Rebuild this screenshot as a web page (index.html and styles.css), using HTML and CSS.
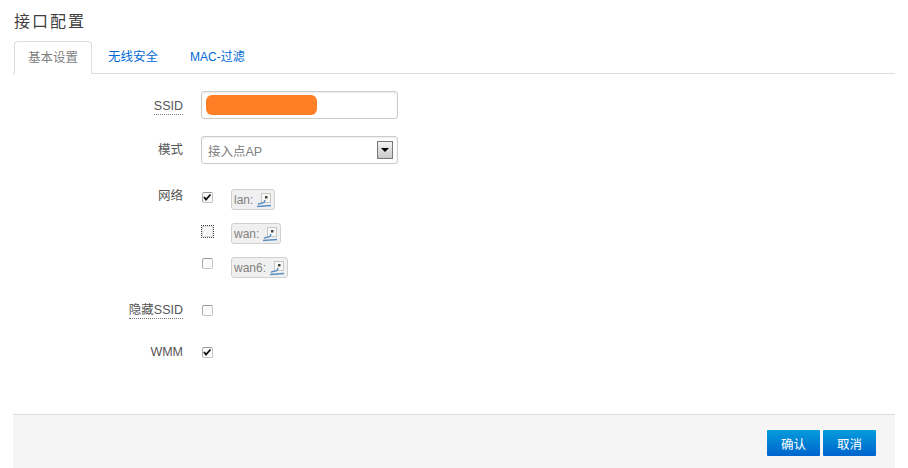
FILE: index.html
```html
<!DOCTYPE html>
<html lang="zh-CN">
<head>
    <meta charset="UTF-8">
    <title>接口配置</title>
    <link rel="stylesheet" href="styles.css">
</head>
<body>
    <div class="page">
        <h2 class="title">接口配置</h2>

        <ul class="tabs">
            <li class="tab active">基本设置</li>
            <li class="tab">无线安全</li>
            <li class="tab tab-mac">MAC-过滤</li>
        </ul>

        <div class="form">
            <div class="row row-ssid">
                <label class="label tip">SSID</label>
                <div class="field">
                    <div class="input">
                        <span class="redact"></span>
                    </div>
                </div>
            </div>

            <div class="row row-mode">
                <label class="label">模式</label>
                <div class="field">
                    <div class="input select">
                        <span class="select-text">接入点AP</span>
                        <span class="select-btn"><span class="select-arrow"></span></span>
                    </div>
                </div>
            </div>

            <div class="row row-net">
                <label class="label">网络</label>
                <div class="field net-list">
                    <div class="net-item">
                        <span class="check checked">
                            <svg viewBox="0 0 10 10" width="10" height="10"><path d="M2 5 L4 7.5 L8.5 2.5" fill="none" stroke="#111" stroke-width="1.8"/></svg>
                        </span>
                        <span class="badge">lan:
                            <svg class="net-icon" viewBox="0 0 16 16" width="16" height="16">
                                <rect x="5.5" y="1.5" width="9" height="9" fill="#f8f8f4" stroke="#c8c8c8" stroke-width="1"/>
                                <rect x="9" y="4" width="2.5" height="2.5" fill="#444"/>
                                <path d="M2 12.5 C4 10 6 12 8 10.5 L9 8" fill="none" stroke="#5a8fc4" stroke-width="1.5"/>
                                <path d="M1 14.5 L15 13.5" stroke="#5a8fc4" stroke-width="1.5"/>
                            </svg>
                        </span>
                    </div>
                    <div class="net-item">
                        <span class="check focused"></span>
                        <span class="badge">wan:
                            <svg class="net-icon" viewBox="0 0 16 16" width="16" height="16">
                                <rect x="5.5" y="1.5" width="9" height="9" fill="#f8f8f4" stroke="#c8c8c8" stroke-width="1"/>
                                <rect x="9" y="4" width="2.5" height="2.5" fill="#444"/>
                                <path d="M2 12.5 C4 10 6 12 8 10.5 L9 8" fill="none" stroke="#5a8fc4" stroke-width="1.5"/>
                                <path d="M1 14.5 L15 13.5" stroke="#5a8fc4" stroke-width="1.5"/>
                            </svg>
                        </span>
                    </div>
                    <div class="net-item">
                        <span class="check"></span>
                        <span class="badge">wan6:
                            <svg class="net-icon" viewBox="0 0 16 16" width="16" height="16">
                                <rect x="5.5" y="1.5" width="9" height="9" fill="#f8f8f4" stroke="#c8c8c8" stroke-width="1"/>
                                <rect x="9" y="4" width="2.5" height="2.5" fill="#444"/>
                                <path d="M2 12.5 C4 10 6 12 8 10.5 L9 8" fill="none" stroke="#5a8fc4" stroke-width="1.5"/>
                                <path d="M1 14.5 L15 13.5" stroke="#5a8fc4" stroke-width="1.5"/>
                            </svg>
                        </span>
                    </div>
                </div>
            </div>

            <div class="row row-hide">
                <label class="label tip">隐藏SSID</label>
                <div class="field"><span class="check"></span></div>
            </div>

            <div class="row row-wmm">
                <label class="label">WMM</label>
                <div class="field">
                    <span class="check checked">
                        <svg viewBox="0 0 10 10" width="10" height="10"><path d="M2 5 L4 7.5 L8.5 2.5" fill="none" stroke="#111" stroke-width="1.8"/></svg>
                    </span>
                </div>
            </div>
        </div>

        <div class="actions">
            <button class="btn">确认</button>
            <button class="btn">取消</button>
        </div>
    </div>
</body>
</html>
```

FILE: styles.css
```css
body {
    margin: 0;
    background: #fff;
    color: #555;
    font-family: "Liberation Sans", "Noto Sans CJK SC", sans-serif;
    font-size: 12.5px;
}
.page {
    width: 882px;
    height: 468px;
    margin-left: 13px;
    overflow: hidden;
}
.title {
    margin: 0;
    padding: 12px 0 0 1px;
    height: 41px;
    box-sizing: border-box;
    font-size: 16px;
    font-weight: normal;
    line-height: 20px;
    letter-spacing: 2px;
    color: #404040;
}

/* Tabs */
.tabs {
    display: flex;
    list-style: none;
    margin: 0;
    padding: 0 0 0 1px;
    height: 33px;
    box-sizing: border-box;
    border-bottom: 1px solid #ddd;
}
.tab {
    height: 32px;
    line-height: 33px;
    padding: 0 16px;
    color: #0069d6;
    white-space: nowrap;
}
.tab-mac {
    font-size: 12px;
}
.active {
    height: 33px;
    width: 78px;
    box-sizing: border-box;
    padding: 0 13px;
    color: #808080;
    background: #fff;
    border: 1px solid #ddd;
    border-bottom: none;
    border-radius: 4px 4px 0 0;
}

/* Form rows */
.form {
    padding-top: 17px;
}
.row {
    display: grid;
    grid-template-columns: 170px 1fr;
    column-gap: 18px;
}
.label {
    justify-self: end;
    height: 16px;
    line-height: 16px;
}
.tip {
    border-bottom: 1px dotted #777;
}
.row-ssid .label {
    margin-top: 7px;
}
.row-mode {
    margin-top: 17px;
}
.row-mode .label {
    margin-top: 6px;
}
.row-net {
    margin-top: 22px;
}
.row-net .label {
    margin-top: 2px;
}
.row-hide {
    margin-top: 24px;
}
.row-wmm {
    margin-top: 25px;
}
.row-hide .field,
.row-wmm .field {
    display: flex;
    align-items: center;
    height: 16px;
}

/* Inputs */
.input {
    display: flex;
    align-items: center;
    width: 197px;
    height: 28px;
    box-sizing: border-box;
    border: 1px solid #ccc;
    border-radius: 3px;
    background: #fff;
    box-shadow: inset 0 1px 2px rgba(0, 0, 0, 0.08);
}
.redact {
    display: block;
    width: 111px;
    height: 20px;
    margin-left: 4px;
    background: #ff7f27;
    border-radius: 6px;
}
.select {
    justify-content: space-between;
    padding: 0 4px 0 6px;
    color: #808080;
}
.select-btn {
    display: flex;
    align-items: center;
    justify-content: center;
    width: 16px;
    height: 18px;
    box-sizing: border-box;
    border: 1px solid #777;
    background: linear-gradient(to bottom, #f2f2f2, #c8c8c8);
}
.select-arrow {
    width: 0;
    height: 0;
    border-left: 4px solid transparent;
    border-right: 4px solid transparent;
    border-top: 4px solid #000;
}

/* Checkboxes */
.check {
    display: flex;
    flex: none;
    width: 11px;
    height: 11px;
    box-sizing: border-box;
    margin-left: 1px;
    border: 1px solid #c4c4c4;
    border-top-color: #999;
    border-left-color: #aaa;
    border-radius: 2px;
    background: #fafafa;
}
.checked svg {
    display: block;
    margin: -1px 0 0 -1px;
}
.focused {
    width: 13px;
    height: 13px;
    margin-left: 0;
    border: 1px dotted #444;
    border-radius: 0;
    box-shadow: inset 0 0 0 1px #ddd;
}

/* Network list */
.net-list {
    display: flex;
    flex-direction: column;
    row-gap: 13px;
    padding-top: 3px;
}
.net-item {
    display: flex;
    height: 21px;
}
.net-item .check {
    margin-top: 3px;
}
.net-item .focused {
    margin-top: 2px;
}
.net-item:last-child .check {
    margin-top: 1px;
}
.check + .badge {
    margin-left: 18px;
}
.focused + .badge {
    margin-left: 17px;
}
.badge {
    display: inline-flex;
    align-items: center;
    column-gap: 3px;
    height: 21px;
    box-sizing: border-box;
    padding: 0 2px;
    border: 1px solid #d0d0d0;
    border-radius: 3px;
    background: #f0f0f0;
    color: #808080;
    font-size: 12px;
}
.net-icon {
    display: block;
}

/* Footer actions */
.actions {
    display: flex;
    justify-content: flex-end;
    column-gap: 3px;
    height: 54px;
    box-sizing: border-box;
    margin-top: 54px;
    padding: 15px 19px 0 0;
    background: #f5f5f5;
    border-top: 1px solid #ddd;
}
.btn {
    width: 53px;
    height: 26px;
    padding: 0;
    border: none;
    border-radius: 1px;
    background: linear-gradient(to bottom, #049cdb, #0064cd);
    color: #fff;
    font-family: inherit;
    font-size: 12.5px;
}
```
